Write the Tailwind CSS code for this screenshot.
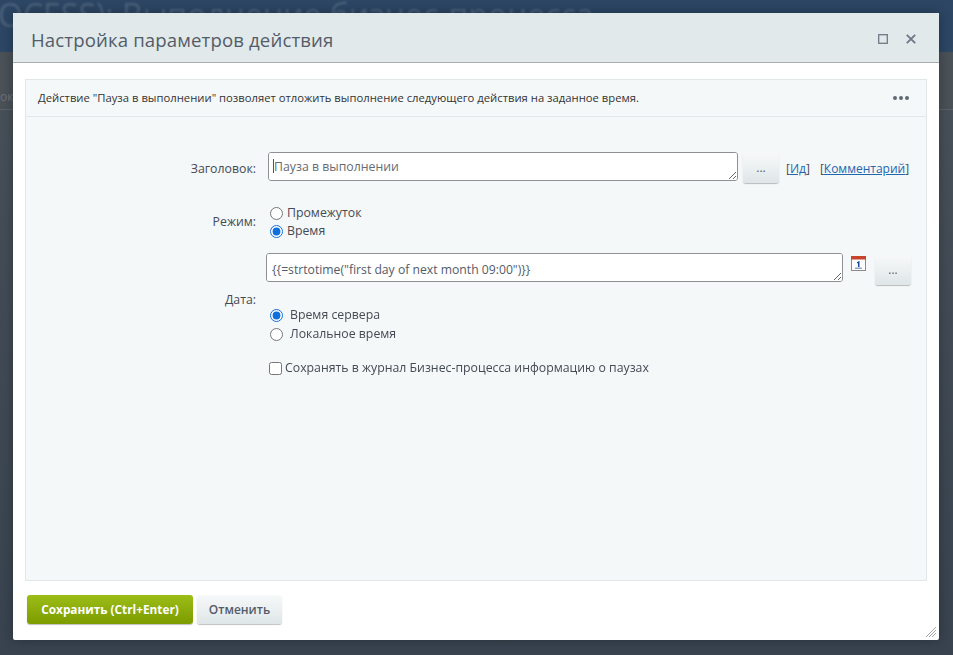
<!DOCTYPE html>
<html lang="ru">
<head>
<meta charset="utf-8">
<script src="https://cdn.jsdelivr.net/npm/@tailwindcss/browser@4"></script>
</head>
<body class="relative h-[655px] w-[953px] overflow-hidden bg-[#434b54] font-['Open_Sans','Noto_Sans',sans-serif]">
  <div class="flex h-[52px] items-start overflow-hidden bg-[#2c4664] text-[32px] leading-[38px] text-white/15 whitespace-nowrap">
    <span class="-ml-[2px] mt-[-4px] blur-[1px]">OCESS): Выполнение бизнес-процесса</span>
  </div>
  <div class="flex h-[58px] items-end border-b border-white/10 bg-[#4a5157] text-xs text-white/20">
    <span class="mb-1">ок</span>
  </div>
  <div class="h-[545px] bg-gradient-to-b from-[#474f58] to-[#38434f]"></div>

  <div class="absolute left-[13px] top-[13px] flex h-[627px] w-[926px] flex-col rounded-[2px] bg-white shadow-[0_0_12px_rgba(0,0,0,0.3)]">
    <header class="flex h-[50px] shrink-0 items-center justify-between border-b border-b-[#a9adb0] bg-[#e1e9eb] pl-[18px] pr-[23px]">
      <h1 class="mt-[5px] text-[18.6px] leading-6 tracking-[0.13px] text-[#535c69]">Настройка параметров действия</h1>
      <div class="mt-[3px] flex items-center gap-[18px]">
        <svg width="10" height="10" viewBox="0 0 10 10" fill="none" stroke="#6f7a86" stroke-width="1.3"><rect x="0.7" y="0.7" width="8.6" height="8.6"/></svg>
        <svg width="10" height="10" viewBox="0 0 10 10" fill="none" stroke="#6b7785" stroke-width="1.8"><path d="M0.8 0.8 9.2 9.2M9.2 0.8 0.8 9.2"/></svg>
      </div>
    </header>

    <main class="mx-3 mt-4 flex h-[502px] flex-col border border-[#e2e8ea] bg-[#f5f8f9]">
      <div class="flex h-[37px] shrink-0 items-center justify-between border-b border-[#e2e8ea] pl-3 pr-[17px] text-[11.28px] text-[#333]">
        <span>Действие "Пауза в выполнении" позволяет отложить выполнение следующего действия на заданное время.</span>
        <span class="flex gap-[2px]">
          <i class="block h-1 w-1 rounded-full bg-[#5f6873]"></i><i class="block h-1 w-1 rounded-full bg-[#5f6873]"></i><i class="block h-1 w-1 rounded-full bg-[#5f6873]"></i>
        </span>
      </div>

      <div class="grid grid-cols-[230px_1fr] pt-[35px] text-[12.3px] text-[#444b54]">
        <label class="pt-[8px] text-right">Заголовок:</label>
        <div class="ml-3 flex items-start">
          <div class="relative h-[29px] w-[470px]">
            <textarea readonly class="block h-[29px] w-[470px] rounded-[3px] border border-[#8d9196] bg-white px-[5px] py-[6px] text-[12.3px] leading-4 text-[#666c74] outline-none">Пауза в выполнении</textarea>
            <i class="absolute left-[5px] top-[7px] block h-[14px] w-px bg-[#555]"></i>
          </div>
          <button class="ml-[5px] mt-[1px] h-[30px] w-9 rounded-[3px] bg-gradient-to-b from-[#f7f9f9] to-[#dfe6e8] text-xs font-normal leading-none text-[#535c69] shadow-[0_1px_1px_rgba(0,0,0,0.25)]">...</button>
          <span class="ml-[7px] mt-[8px] whitespace-nowrap text-[12px]">[<a class="text-[#2067b0] underline">Ид</a>]</span>
          <span class="ml-[10px] mt-[8px] whitespace-nowrap text-[12px]">[<a class="text-[#2067b0] underline">Комментарий</a>]</span>
        </div>

        <label class="pt-[30px] text-right">Режим:</label>
        <div class="ml-[14px] mt-[21px] flex flex-col">
          <label class="flex h-[18px] items-center gap-[4px]"><input type="radio" name="m" class="m-0 h-[13px] w-[13px]"><span>Промежуток</span></label>
          <label class="flex h-[18px] items-center gap-[4px]"><input type="radio" name="m" checked class="m-0 h-[13px] w-[13px] accent-[#0f6fdc]"><span>Время</span></label>
        </div>

        <label class="pt-[51px] text-right">Дата:</label>
        <div class="ml-[10px] mt-[13px] flex flex-col">
          <div class="flex items-start">
            <textarea readonly class="block h-[29px] w-[577px] rounded-[3px] border border-[#8d9196] bg-white px-[5px] py-[8px] text-[12.2px] leading-4 text-[#535c69] outline-none">{{=strtotime("first day of next month 09:00")}}</textarea>
            <svg class="ml-2 mt-[3px]" width="15" height="15" viewBox="0 0 15 15"><rect x="0.5" y="0.5" width="14" height="14" fill="#fff" stroke="#8c8c8c"/><rect x="0" y="0" width="15" height="3.5" fill="#c8452c"/><path d="M6 6 8.5 5V11H7V7L6 7.4ZM4 11.7H11V12.6H4Z" fill="#164a9e"/></svg>
            <button class="ml-[9px] mt-[2px] h-[30px] w-9 rounded-[3px] bg-gradient-to-b from-[#f7f9f9] to-[#dfe6e8] text-xs font-normal leading-none text-[#535c69] shadow-[0_1px_1px_rgba(0,0,0,0.25)]">...</button>
          </div>
          <div class="ml-[4px] mt-[21px] flex flex-col">
            <label class="flex h-[19px] items-center gap-[7px]"><input type="radio" name="t" checked class="m-0 h-[13px] w-[13px] accent-[#0f6fdc]"><span>Время сервера</span></label>
            <label class="flex h-[19px] items-center gap-[7px]"><input type="radio" name="t" class="m-0 h-[13px] w-[13px]"><span>Локальное время</span></label>
          </div>
          <label class="ml-[3px] mt-[15px] flex items-center gap-[3px]"><input type="checkbox" class="m-0 h-[13px] w-[13px]"><span>Сохранять в журнал Бизнес-процесса информацию о паузах</span></label>
        </div>
      </div>
    </main>

    <footer class="relative flex flex-1 items-start pl-[14px] pt-[14px]">
      <button class="h-[29px] w-[166px] rounded-[3px] bg-gradient-to-b from-[#9cbd17] to-[#7c9c00] text-[11.8px] font-bold text-white shadow-[0_1px_1px_rgba(0,0,0,0.25)]">Сохранить (Ctrl+Enter)</button>
      <button class="ml-1 h-[29px] w-[85px] rounded-[3px] bg-gradient-to-b from-[#f7f9f9] to-[#dfe6e8] text-[12px] font-semibold text-[#535c69] shadow-[0_1px_1px_rgba(0,0,0,0.25)]">Отменить</button>
      <svg class="absolute bottom-[2px] right-[2px]" width="12" height="12" viewBox="0 0 12 12" stroke="#a4a8ab" stroke-width="1"><path d="M11 1 1 11M11 4 4 11M11 7 7 11"/></svg>
    </footer>
  </div>
</body>
</html>
